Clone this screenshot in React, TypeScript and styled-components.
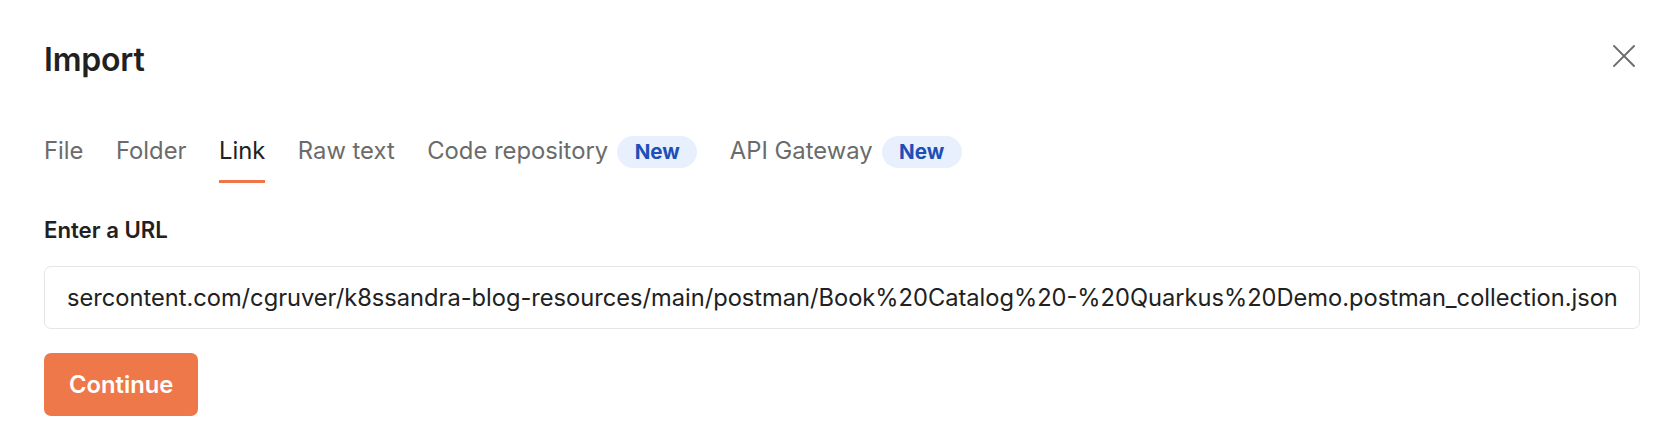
import React, { useState } from "react";
import styled, { createGlobalStyle } from "styled-components";

const GlobalStyle = createGlobalStyle`
  html, body {
    margin: 0;
    padding: 0;
    background: #ffffff;
  }
  body {
    font-family: Inter, "Noto Sans", "Liberation Sans", sans-serif;
  }
`;

interface iTab {
  label: string;
  isNew?: boolean;
}

const tabs: iTab[] = [
  { label: "File" },
  { label: "Folder" },
  { label: "Link" },
  { label: "Raw text" },
  { label: "Code repository", isNew: true },
  { label: "API Gateway", isNew: true },
];

const urlValue =
  "sercontent.com/cgruver/k8ssandra-blog-resources/main/postman/Book%20Catalog%20-%20Quarkus%20Demo.postman_collection.json";

function App() {
  const [active, setActive] = useState("Link");

  return (
    <>
      <GlobalStyle />
      <Modal>
        <Header>
          <Title>Import</Title>
          <CloseButton aria-label="Close">
            <svg width="22" height="22" viewBox="0 0 22 22">
              <path
                d="M1 1 L21 21 M21 1 L1 21"
                stroke="#6b6b6b"
                strokeWidth="1.9"
                strokeLinecap="square"
              />
            </svg>
          </CloseButton>
        </Header>

        <TabList>
          {tabs.map((t) => (
            <Tab key={t.label} onClick={() => setActive(t.label)}>
              <TabLabel $active={active === t.label}>{t.label}</TabLabel>
              {t.isNew && <Badge>New</Badge>}
            </Tab>
          ))}
        </TabList>

        <Label>Enter a URL</Label>
        <UrlInput readOnly value={urlValue} />

        <Button>Continue</Button>
      </Modal>
    </>
  );
}

export default App;

const Modal = styled.div`
  display: flex;
  flex-direction: column;
  align-items: flex-start;
  padding: 40px 34px 0 44px;
  height: 436px;
  box-sizing: border-box;
`;

const Header = styled.div`
  width: 100%;
  display: flex;
  justify-content: space-between;
  align-items: flex-start;
`;

const Title = styled.h2`
  margin: 0;
  font-size: 32px;
  line-height: 40px;
  font-weight: 600;
  color: #212121;
  letter-spacing: -0.2px;
`;

const CloseButton = styled.button`
  width: 32px;
  height: 32px;
  padding: 0;
  border: none;
  background: transparent;
  display: flex;
  justify-content: center;
  align-items: center;
  cursor: pointer;
`;

const TabList = styled.div`
  display: flex;
  gap: 32.5px;
  margin-top: 55px;
`;

const Tab = styled.div`
  display: flex;
  align-items: flex-start;
  gap: 9px;
  cursor: pointer;
`;

const TabLabel = styled.span<{ $active?: boolean }>`
  font-size: 23.8px;
  line-height: 32px;
  padding-bottom: 13px;
  color: ${(p) => (p.$active ? "#212121" : "#6b6b6b")};
  border-bottom: 3.5px solid ${(p) => (p.$active ? "#ef7548" : "transparent")};
`;

const Badge = styled.span`
  height: 32px;
  padding: 0 17.5px;
  border-radius: 16px;
  background-color: #e8f0fd;
  color: #1d4fb8;
  font-size: 20.6px;
  font-weight: 700;
  line-height: 32px;
  margin-top: 1px;
`;

const Label = styled.div`
  margin-top: 35px;
  font-size: 22.2px;
  line-height: 24px;
  font-weight: 600;
  color: #212121;
`;

const UrlInput = styled.input`
  margin-top: 24px;
  width: 100%;
  height: 63px;
  box-sizing: border-box;
  padding: 0 14px 0 22px;
  border: 1.5px solid #e6e6e6;
  border-radius: 7px;
  font-family: Inter, "Noto Sans", "Liberation Sans", sans-serif;
  font-size: 23.65px;
  color: #212121;
  background: #ffffff;
  outline: none;
`;

const Button = styled.button`
  margin-top: 24px;
  height: 63px;
  padding: 0 25px;
  border: none;
  border-radius: 7px;
  background-color: #ef784a;
  color: #ffffff;
  font-family: Inter, "Noto Sans", "Liberation Sans", sans-serif;
  font-size: 23.8px;
  font-weight: 600;
  cursor: pointer;
`;
